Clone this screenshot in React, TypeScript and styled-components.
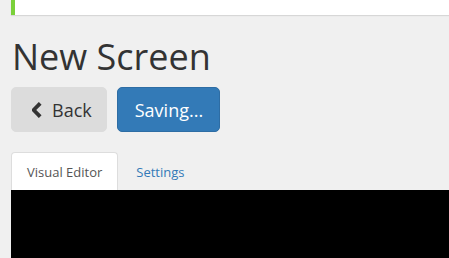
import React from "react";
import styled, { createGlobalStyle } from "styled-components";

const Global = createGlobalStyle`
  html, body { margin: 0; padding: 0; background: #f0f0f0; }
  body { font-family: "Open Sans", "Liberation Sans", sans-serif; overflow: hidden; }
`;

const Page = styled.div`
  padding-left: 11px;
  display: flex;
  flex-direction: column;
  height: 258px;
`;

const Notice = styled.div`
  height: 15px;
  background: #fff;
  border-left: 4px solid #7ad03a;
  box-shadow: 0 1px 1px rgba(0, 0, 0, 0.1);
`;

const Title = styled.h1`
  margin: 19px 0 0 1px;
  font-size: 36px;
  font-weight: 400;
  line-height: 46px;
  color: #333;
`;

const Actions = styled.div`
  display: flex;
  gap: 10px;
  margin-top: 7px;
`;

const Button = styled.button<{ $primary?: boolean }>`
  height: 45px;
  padding: ${(p) => (p.$primary ? "0 16px 0 17px" : "0 14px 0 20px")};
  border-radius: 5px;
  font-family: inherit;
  font-size: 18px;
  display: flex;
  align-items: center;
  gap: 10px;
  border: 1px solid ${(p) => (p.$primary ? "#2e6da4" : "#dcdcdc")};
  background: ${(p) => (p.$primary ? "#337ab7" : "#dcdcdc")};
  color: ${(p) => (p.$primary ? "#fff" : "#333")};
`;

const Tabs = styled.div`
  display: flex;
  margin-top: 20px;
`;

const Tab = styled.div<{ $active?: boolean }>`
  height: 37px;
  padding: 0 15px;
  display: flex;
  align-items: center;
  font-size: 13px;
  border-radius: 4px 4px 0 0;
  border: 1px solid ${(p) => (p.$active ? "#ddd" : "transparent")};
  border-bottom: none;
  background: ${(p) => (p.$active ? "#fff" : "transparent")};
  color: ${(p) => (p.$active ? "#555" : "#337ab7")};
  margin-right: 2px;
`;

const Canvas = styled.div`
  flex: 1;
  background: #000;
`;

const Chevron = () => (
  <svg width="10" height="16" viewBox="0 0 10 16">
    <path d="M8.2 1.3 L1.6 8 L8.2 14.7" fill="none" stroke="#333" strokeWidth="3.8" strokeLinejoin="miter" />
  </svg>
);

export default function App() {
  return (
    <>
      <Global />
      <Page>
        <Notice />
        <Title>New Screen</Title>
        <Actions>
          <Button>
            <Chevron />
            Back
          </Button>
          <Button $primary>Saving...</Button>
        </Actions>
        <Tabs>
          <Tab $active>Visual Editor</Tab>
          <Tab>Settings</Tab>
        </Tabs>
        <Canvas />
      </Page>
    </>
  );
}
